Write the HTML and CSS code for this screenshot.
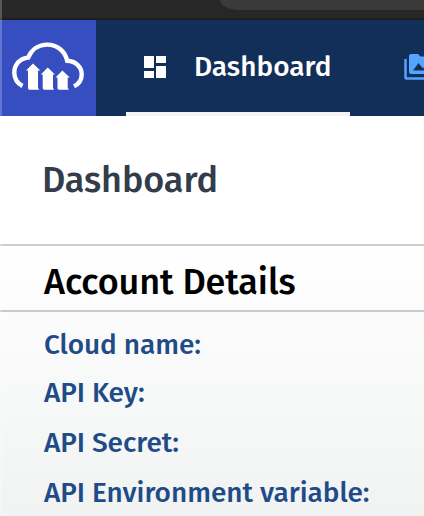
FILE: index.html
```html
<!DOCTYPE html>
<html lang="en">
<head>
<meta charset="utf-8">
<title>Dashboard</title>
<link rel="stylesheet" href="styles.css">
</head>
<body>
<div class="browser"><div class="address"></div></div>
<nav class="nav">
  <a class="logo">
    <svg width="96" height="96" viewBox="0 0 96 96" fill="none">
      <path d="M22.500 66C17.500 63.500 14.300 58.300 14.300 52.600C14.300 44.500 20 38.400 28.300 37.500C31.500 29.500 38.500 24.600 47.300 24.600C57 24.600 65 31 67.200 40.800C75.500 41.200 81.700 47 81.700 54.300C81.700 59.700 79 64 74 66.300" stroke="#fff" stroke-width="4.400"/>
      <path fill="#fff" d="M33 43.500L40.300 50.500H38V68L39.300 69.800H29.500Q28 69.800 28 68V50.500H26ZM47.700 47.500L55 54.500H53V68L54.200 69.800H44.200Q42.700 69.800 42.700 68V54.500H40.800ZM62.400 50.500L69.800 57.500H67.700V68L69 69.800H59Q57.500 69.800 57.500 68V57.500H55.500Z"/>
    </svg>
  </a>
  <a class="tab">
    <svg class="tab-icon" width="22" height="22" viewBox="0 0 22 22" fill="#fff"><path d="M0 0h10v12H0zM12 0h10v7H12zM0 15h10v7H0zM12 10h10v12H12z"/></svg>
    <span class="tab-label">Dashboard</span>
  </a>
  <a class="media">
    <svg width="28" height="27" viewBox="0 0 28 27"><path d="M1.500 5v18.500Q1.500 24.500 2.500 24.500H28" fill="none" stroke="#55a4ff" stroke-width="2.500"/><path fill="#55a4ff" fill-rule="evenodd" d="M7 0h7l2.500 2.500H28V20H7Q5 20 5 18V2Q5 0 7 0ZM9 16.500h19l-5-7-4 5-4.500-5.500Z"/></svg>
  </a>
</nav>
<header class="page-head"><h1>Dashboard</h1></header>
<main class="details">
  <h2>Account Details</h2>
  <ul>
    <li>Cloud name:</li>
    <li>API Key:</li>
    <li>API Secret:</li>
    <li>API Environment variable:</li>
  </ul>
</main>
<div class="edge"></div>
</body>
</html>
```
FILE: styles.css
```css
* { box-sizing: border-box; }
body {
  margin: 0;
  height: 516px;
  overflow: hidden;
  display: flex;
  flex-direction: column;
  background: #fff;
  font-family: "Fira Sans", "Noto Sans", sans-serif;
  font-weight: 500;
}
h1, h2, ul { margin: 0; padding: 0; font-weight: 500; }
h1, h2, li, .tab-label { white-space: nowrap; }
.browser { height: 20px; flex: none; background: #272727; border-bottom: 2px solid #1e1e1e; }
.address { height: 10px; margin-left: 220px; background: #3a3a3a; border-bottom-left-radius: 20px 10px; }
.nav { display: flex; height: 96px; flex: none; background: #112f59; overflow: hidden; }
.logo { width: 96px; flex: none; background: #374ec1; }
.tab {
  width: 224px;
  margin-left: 30px;
  padding: 0 0 0 18px;
  flex: none;
  display: flex;
  border-bottom: 4px solid #f3f3f3;
  color: #fff;
}
.tab-icon { margin-top: 36px; flex: none; }
.tab-label { margin-left: 28px; font-size: 28px; line-height: 93px; }
.media { margin: 34px 0 0 54px; flex: none; }
.page-head { height: 130px; flex: none; border-bottom: 2px solid #cecece; padding-left: 42px; }
h1 { font-size: 36px; line-height: 128px; color: #323c4a; letter-spacing: -0.1px; }
.details { flex: 1; background: linear-gradient(#fff, #fcfcfc 24%, #f1f3f3); }
h2 { height: 66px; padding: 6px 0 0 44px; border-bottom: 2px solid #c7cacf; font-size: 36px; line-height: 60px; color: #000; letter-spacing: -0.1px; }
ul { padding: 8px 0 0 44px; list-style: none; font-size: 28px; line-height: 50px; color: #1f4c87; letter-spacing: -0.04px; }
li:first-child { height: 48px; }
.edge { position: absolute; left: 0; top: 0; width: 2px; height: 516px; background: rgba(255, 255, 255, .22); }
```
